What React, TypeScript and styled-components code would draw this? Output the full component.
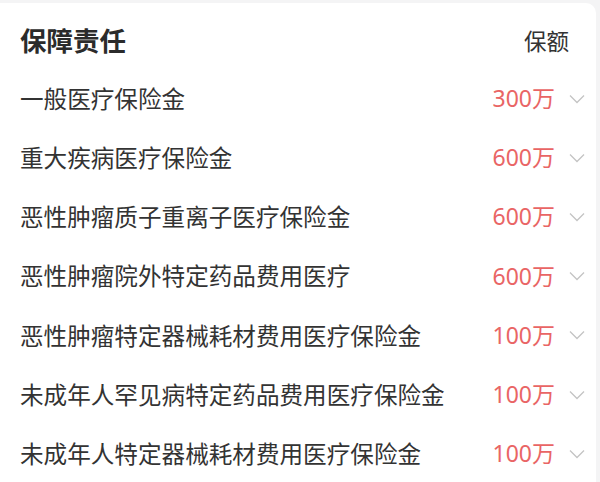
import React from "react";
import styled, { createGlobalStyle } from "styled-components";

const Global = createGlobalStyle`
  html, body { margin: 0; padding: 0; background: #f4f4f5; }
  body { font-family: "Noto Sans CJK SC", "Noto Sans", sans-serif; }
`;

const Page = styled.div`
  width: 600px;
  height: 482px;
  padding: 3px 4px 0 0;
  box-sizing: border-box;
  overflow: hidden;
`;

const Card = styled.div`
  background: #fff;
  border-radius: 0 10px 0 0;
  padding: 8px 11px 0 20px;
  height: 100%;
  box-sizing: border-box;
`;

const Header = styled.div`
  display: flex;
  align-items: center;
  justify-content: space-between;
  height: 58px;
`;

const Title = styled.h2`
  margin: 0;
  font-size: 26.5px;
  font-weight: 700;
  color: #2b2b2b;
  line-height: 1;
`;

const HeaderLabel = styled.span`
  font-size: 22.5px;
  color: #333;
  margin-right: 16px;
  line-height: 1;
`;

const Row = styled.div`
  display: flex;
  align-items: center;
  justify-content: space-between;
  height: 59.2px;
`;

const Name = styled.span`
  font-size: 23.6px;
  color: #333;
  line-height: 1;
`;

const Right = styled.div`
  display: flex;
  align-items: center;
  gap: 14px;
`;

const Amount = styled.span`
  font-size: 23px;
  color: #e96565;
  line-height: 1;
  font-family: "Noto Sans", "Noto Sans CJK SC", sans-serif;
`;

const Chevron = () => (
  <svg width="16" height="10" viewBox="0 0 16 10" fill="none">
    <path d="M1 1.5 L8 8.5 L15 1.5" stroke="#c4c4c4" strokeWidth="1.3" />
  </svg>
);

const rows: [string, string][] = [
  ["一般医疗保险金", "300万"],
  ["重大疾病医疗保险金", "600万"],
  ["恶性肿瘤质子重离子医疗保险金", "600万"],
  ["恶性肿瘤院外特定药品费用医疗", "600万"],
  ["恶性肿瘤特定器械耗材费用医疗保险金", "100万"],
  ["未成年人罕见病特定药品费用医疗保险金", "100万"],
  ["未成年人特定器械耗材费用医疗保险金", "100万"],
];

export default function App() {
  return (
    <>
      <Global />
      <Page>
        <Card>
          <Header>
            <Title>保障责任</Title>
            <HeaderLabel>保额</HeaderLabel>
          </Header>
          {rows.map(([n, a]) => (
            <Row key={n}>
              <Name>{n}</Name>
              <Right>
                <Amount>{a}</Amount>
                <Chevron />
              </Right>
            </Row>
          ))}
        </Card>
      </Page>
    </>
  );
}
